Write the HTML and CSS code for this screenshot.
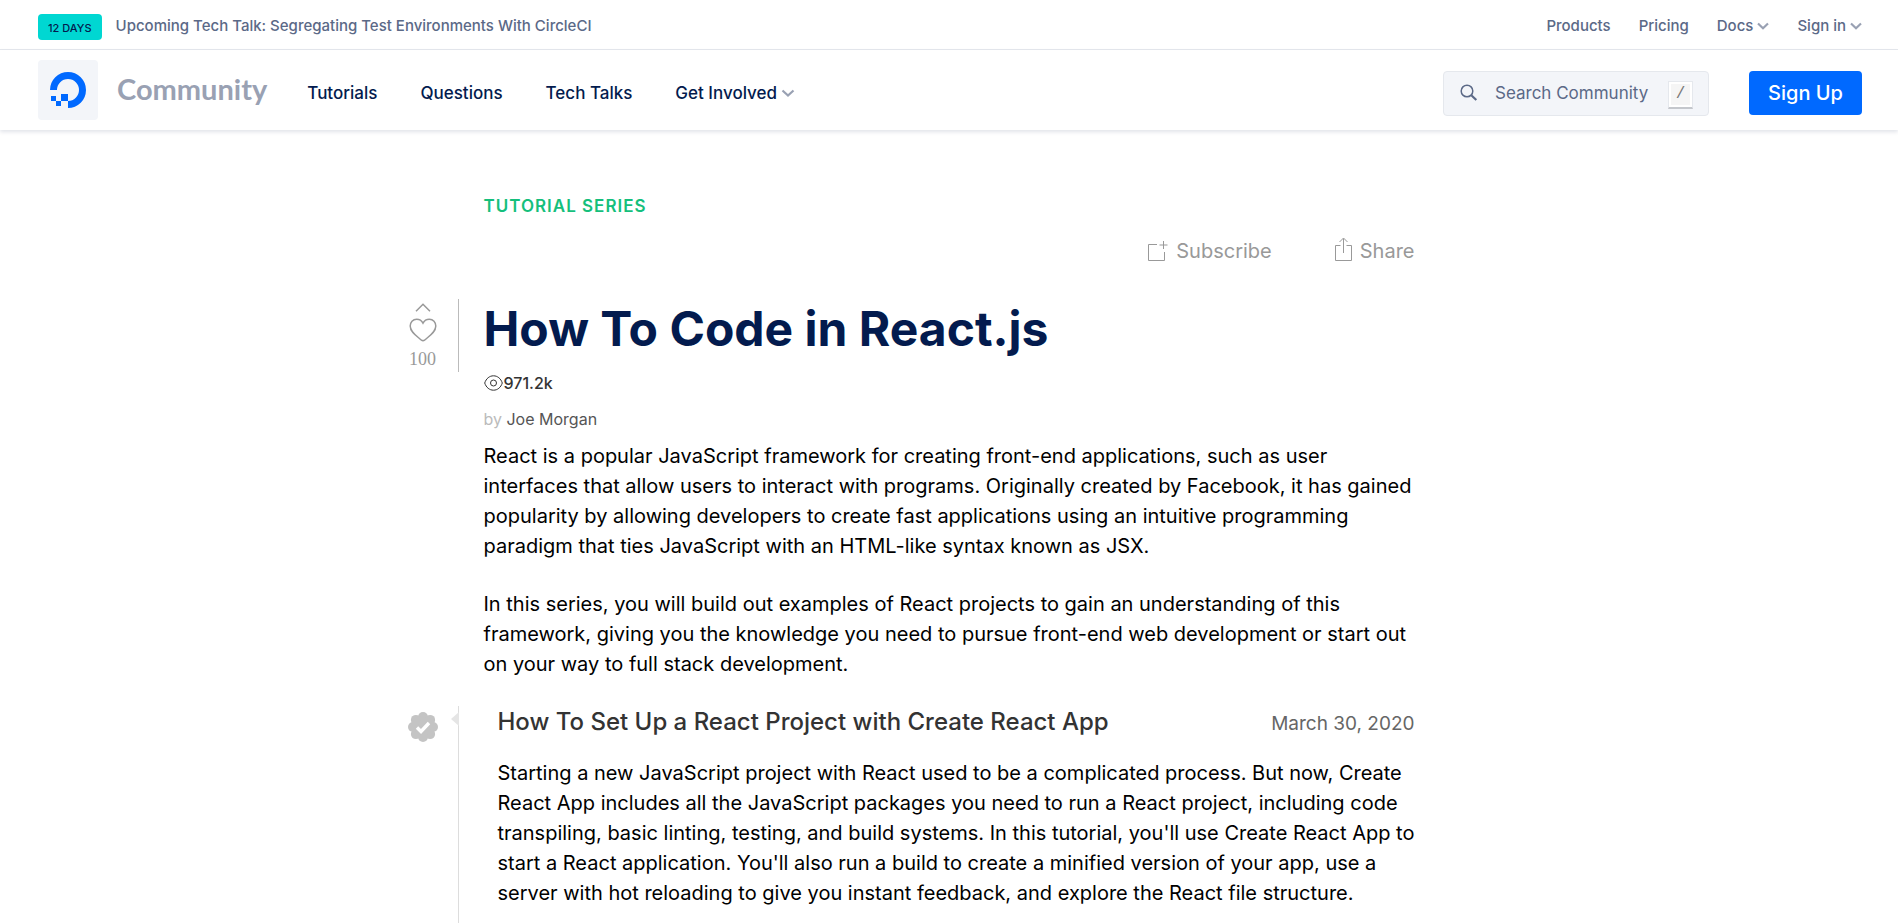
FILE: index.html
```html
<!DOCTYPE html>
<html lang="en">
<head>
<meta charset="utf-8">
<meta name="viewport" content="width=device-width, initial-scale=1">
<title>How To Code in React.js | Community</title>
<link rel="stylesheet" href="styles.css">
</head>
<body>
<div class="topbar">
  <a class="promo" href="#"><span class="tag">12 DAYS</span><span>Upcoming Tech Talk: Segregating Test Environments With CircleCI</span></a>
  <nav class="links" aria-label="Account">
    <a href="#">Products</a>
    <a href="#">Pricing</a>
    <button type="button">Docs<svg class="caret" width="12" height="8" viewBox="0 0 12 8"><path d="M1 1.500 6 6.200l5-4.700"/></svg></button>
    <button type="button">Sign in<svg class="caret" width="12" height="8" viewBox="0 0 12 8"><path d="M1 1.500 6 6.200l5-4.700"/></svg></button>
  </nav>
</div>
<header class="header">
  <a class="brand" href="#">
    <span class="mark"><svg width="36" height="36" viewBox="0 0 36 36" fill="#0069ff"><path d="M18 36v-7A11 11 0 1 0 7 18H0A18 18 0 1 1 18 36Z"/><path d="M11 22h7v7h-7zM6 29h5v5H6zM1 24h5v5H1z"/></svg></span>
    <span class="wordmark">Community</span>
  </a>
  <div class="bar">
    <nav class="menu" aria-label="Community">
      <a href="#">Tutorials</a>
      <a href="#">Questions</a>
      <a href="#">Tech Talks</a>
      <button type="button">Get Involved<svg class="caret" width="14" height="9" viewBox="0 0 14 9"><path d="M1.500 1.500 7 6.500l5.500-5"/></svg></button>
    </nav>
    <form class="search" role="search">
      <svg width="18" height="18" viewBox="0 0 18 18" fill="none" stroke="#5b6987" stroke-width="1.5"><circle cx="7" cy="7" r="5.800"/><path d="M11.300 11.300l5 4.700" stroke-width="2.200"/></svg>
      <input type="text" placeholder="Search Community" aria-label="Search Community">
      <kbd>/</kbd>
    </form>
    <button class="signup" type="button">Sign Up</button>
  </div>
</header>
<main class="page">
  <p class="kicker">Tutorial Series</p>
  <div class="actions">
    <button type="button"><svg width="20" height="20" viewBox="0 0 20 20"><path d="M9 3.500H.5v16h16V11M15.500 0v8M11.500 4h8"/></svg>Subscribe</button>
    <button type="button"><svg class="share" width="17" height="25" viewBox="0 0 17 25"><path d="M5.500 8.500h-5v15h16v-15h-5M8.500 16V1.500M4.500 5l4-4 4 4"/></svg>Share</button>
  </div>
  <section class="intro">
    <button class="vote" type="button" aria-label="Like, 100 likes">
      <svg width="16" height="9" viewBox="0 0 16 9"><path d="M1 8.200 8 1.200l7 7"/></svg>
      <svg class="heart" width="28" height="24" viewBox="0 0 28 24"><path d="M14 5.200C12.500 2.300 10 1.300 7.700 1.300 3.800 1.300 1.200 4.300 1.200 8c0 6.400 6.800 10.200 11.300 14.200q1.500 1.200 3 0C20 18.200 26.800 14.400 26.800 8c0-3.700-2.600-6.700-6.500-6.700C18 1.300 15.500 2.300 14 5.200Z"/></svg>
      <span>100</span>
    </button>
    <div>
      <h1>How To Code in React.js</h1>
      <p class="views"><svg width="19" height="16" viewBox="0 0 19 16"><path d="M.7 8C2.200 3.500 5.500.8 9.500.8S16.800 3.500 18.300 8c-1.500 4.500-4.800 7.200-8.800 7.200S2.200 12.500.7 8Z"/><circle cx="9.500" cy="8" r="3"/></svg>971.2k</p>
      <p class="author">by <a href="#">Joe Morgan</a></p>
      <p class="copy">React is a popular JavaScript framework for creating front-end applications, such as user interfaces that allow users to interact with programs. Originally created by Facebook, it has gained popularity by allowing developers to create fast applications using an intuitive programming paradigm that ties JavaScript with an HTML-like syntax known as JSX.</p>
      <p class="copy">In this series, you will build out examples of React projects to gain an understanding of this framework, giving you the knowledge you need to pursue front-end web development or start out on your way to full stack development.</p>
    </div>
  </section>
  <article class="entry">
    <svg class="badge" width="30" height="30" viewBox="0 0 30 30"><g fill="#c4c4c4"><circle cx="15" cy="15" r="11.500"/><circle cx="15" cy="5" r="5"/><circle cx="22.100" cy="7.900" r="5"/><circle cx="25" cy="15" r="5"/><circle cx="22.100" cy="22.100" r="5"/><circle cx="15" cy="25" r="5"/><circle cx="7.900" cy="22.100" r="5"/><circle cx="5" cy="15" r="5"/><circle cx="7.900" cy="7.900" r="5"/></g><path d="M9 15.500l4 4 8-8.500" fill="none" stroke="#fff" stroke-width="3.400"/></svg>
    <div class="entry-body">
      <svg class="pointer" width="8" height="14" viewBox="0 0 8 14"><path d="M8 0v14L0 7z" fill="#e5e5e5"/></svg>
      <div class="entry-head">
        <h2><a href="#">How To Set Up a React Project with Create React App</a></h2>
        <time datetime="2020-03-30">March 30, 2020</time>
      </div>
      <p class="copy">Starting a new JavaScript project with React used to be a complicated process. But now, Create React App includes all the JavaScript packages you need to run a React project, including code transpiling, basic linting, testing, and build systems. In this tutorial, you'll use Create React App to start a React application. You'll also run a build to create a minified version of your app, use a server with hot reloading to give you instant feedback, and explore the React file structure.</p>
    </div>
  </article>
</main>
</body>
</html>
```
FILE: styles.css
```css
* { box-sizing: border-box; }
body {
  margin: 0;
  background: #fff;
  color: #000;
  font: 400 20px/30px Inter, "Liberation Sans", sans-serif;
}
h1, h2, p { margin: 0; }
a { color: inherit; text-decoration: none; }
button {
  padding: 0;
  border: 0;
  background: none;
  color: inherit;
  font: inherit;
  cursor: pointer;
}
svg { display: block; flex: none; }

.topbar {
  display: flex;
  justify-content: space-between;
  align-items: center;
  height: 50px;
  padding: 2px 36px 0 38px;
  border-bottom: 1px solid #e5e8ed;
  color: #5b6987;
  font-size: 15px;
  line-height: 20px;
  font-weight: 500;
}
.promo, .links { display: flex; align-items: center; }
.promo { gap: 14px; }
.tag {
  display: flex;
  align-items: center;
  height: 26px;
  padding: 2px 10px 0;
  margin-top: 3px;
  border-radius: 4px;
  background: #00d7d2;
  color: #031b4e;
  font-size: 11px;
}
.links { gap: 28px; }
.links button, .menu button { display: flex; align-items: center; gap: 4px; }
.caret { fill: none; stroke: #99a1b3; stroke-width: 2.2; }

.header {
  display: flex;
  align-items: center;
  gap: 40px;
  height: 80px;
  padding: 0 36px 0 38px;
  box-shadow: 0 2px 4px rgba(3, 27, 78, .12);
}
.brand { display: flex; align-items: center; gap: 19px; }
.mark {
  display: grid;
  place-items: center;
  width: 60px;
  height: 60px;
  border-radius: 4px;
  background: #f3f5f9;
}
.wordmark {
  color: #99a1b3;
  font: 700 29px/36px Lato, Inter, sans-serif;
  padding-bottom: 2px;
}
.bar { display: flex; flex: 1; align-items: center; padding-top: 6px; }
.menu {
  display: flex;
  gap: 43px;
  margin-right: auto;
  color: #031b4e;
  font-size: 17px;
  line-height: 24px;
  font-weight: 500;
}
.search {
  display: flex;
  align-items: center;
  width: 266px;
  height: 45px;
  margin-right: 40px;
  padding: 0 15px 0 16px;
  border: 1px solid #e5e8ed;
  border-radius: 4px;
  background: #f3f5f9;
}
.search input {
  flex: 1;
  min-width: 0;
  padding: 0 0 0 17px;
  border: 0;
  outline: 0;
  background: none;
  color: #5b6987;
  font: 400 17px/24px Inter, sans-serif;
}
.search input::placeholder { color: #5b6987; opacity: 1; }
kbd {
  width: 25px;
  height: 28px;
  margin-top: 3px;
  border: 1px solid #e5e8ed;
  border-bottom: 2px solid #c4c7cc;
  background: #f5f5f5;
  box-shadow: inset 0 0 0 2px #fff;
  color: #777;
  font: 400 16px/24px "Liberation Mono", monospace;
  text-align: center;
}
.signup {
  width: 113px;
  height: 44px;
  border-radius: 4px;
  background: #0069ff;
  color: #fff;
  font-size: 20px;
  font-weight: 500;
}

.page {
  max-width: 1083px;
  margin: 0 auto;
  padding: 61px 76px 0 0;
}
.kicker {
  padding-left: 76px;
  color: #15bf7c;
  font-size: 17px;
  font-weight: 600;
  letter-spacing: 1px;
  text-transform: uppercase;
}
.actions {
  display: flex;
  justify-content: flex-end;
  gap: 63px;
  margin-top: 15px;
  color: #999;
}
.actions button { display: flex; align-items: center; gap: 8px; }
.actions svg, .vote svg, .views svg { fill: none; stroke: #999; }
.actions .share { margin-bottom: 3px; }
.intro { display: grid; grid-template-columns: 51px 1fr; column-gap: 25px; margin-top: 33px; }
.vote {
  display: flex;
  flex-direction: column;
  align-items: center;
  height: 73px;
  padding: 4px 20px 0 0;
  border-right: 1px solid #bbb;
  color: #999;
  font: 400 18px/24px "Liberation Serif", serif;
}
.vote svg { stroke-width: 1.5; }
.vote .heart { margin: 6px 0 5px; }
h1 {
  color: #031b4e;
  font-size: 48px;
  line-height: 60px;
  font-weight: 700;
}
.views, .author { font-size: 16px; line-height: 24px; }
.views {
  display: flex;
  align-items: center;
  gap: 1px;
  margin-top: 12px;
  color: #333;
  font-weight: 500;
}
.views svg { stroke: #333; }
.author { margin-top: 12px; color: #bbb; }
.author a { color: #555; }
.author + .copy { margin-top: 10px; }
.copy + .copy { margin-top: 28px; }
.entry { display: grid; grid-template-columns: 50px 1fr; margin-top: 27px; }
.badge { margin-top: 6px; }
.entry-body {
  position: relative;
  padding: 0 0 40px 39px;
  border-left: 1px solid #ddd;
}
.pointer { position: absolute; left: -8px; top: 6px; }
.entry-head { display: flex; justify-content: space-between; align-items: baseline; margin-bottom: 19px; }
h2 { color: #333; font-size: 24px; line-height: 32px; font-weight: 500; }
time { color: #666; font-size: 19px; }
```
